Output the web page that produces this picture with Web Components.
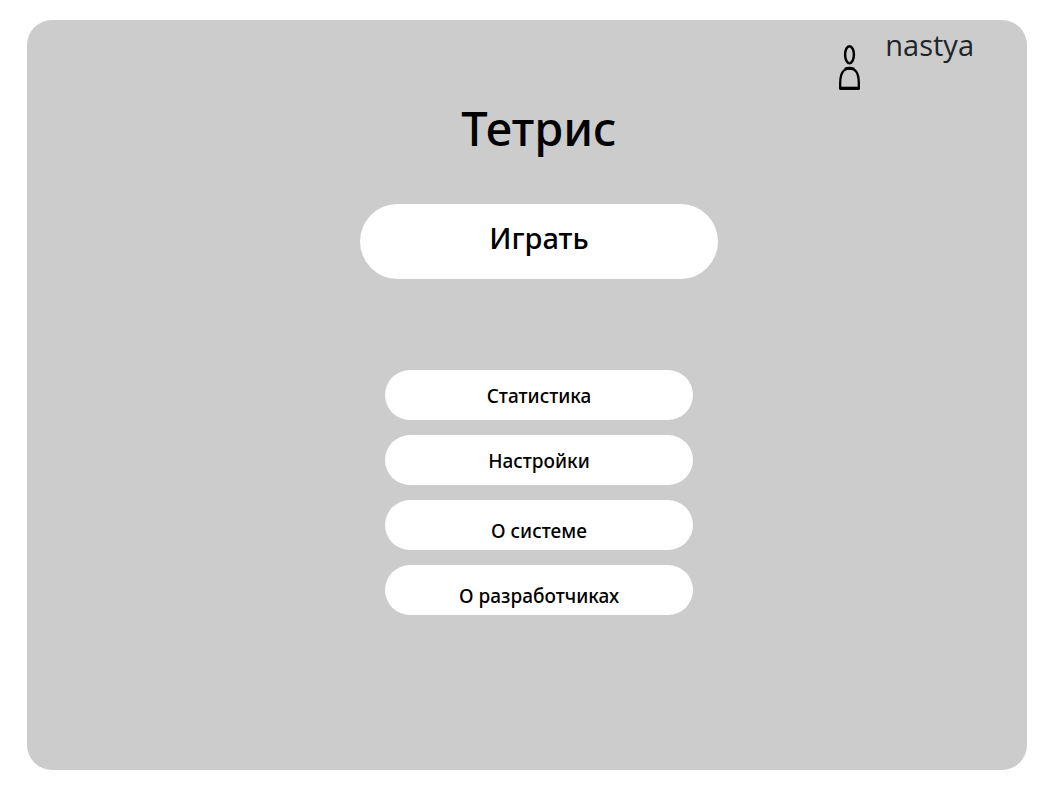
<!DOCTYPE html>
<html lang="ru">
<head>
<meta charset="utf-8">
<meta name="viewport" content="width=device-width, initial-scale=1">
<title>Тетрис</title>
<style>
  html, body { margin: 0; }
  body {
    font-family: "Noto Sans", "Open Sans", sans-serif;
    color: #000;
    background: #fff;
  }
</style>
</head>
<body>
<game-screen>
  <user-badge slot="user">nastya</user-badge>
  <span slot="title">Тетрис</span>
  <menu-button size="large">Играть</menu-button>
  <menu-list>
    <menu-button>Статистика</menu-button>
    <menu-button>Настройки</menu-button>
    <menu-button variant="about">О системе</menu-button>
    <menu-button variant="about">О разработчиках</menu-button>
  </menu-list>
</game-screen>

<script>
class GameScreen extends HTMLElement {
  constructor() {
    super();
    this.attachShadow({ mode: "open" }).innerHTML = `
      <style>
        :host { display: flex; box-sizing: border-box; min-height: 100vh; padding: 20px 20px 18px 27px; }
        main { flex: 1; min-width: 0; box-sizing: border-box; border-radius: 25px; background: #ccc; padding-bottom: 24px; }
        header { display: flex; justify-content: flex-end; height: 74px; padding-right: 53px; }
        .content { display: flex; flex-direction: column; align-items: center; padding-left: 24px; }
        h1 { margin: 0 0 42px; font-size: 47px; line-height: 68px; font-weight: 500; }
      </style>
      <main>
        <header><slot name="user"></slot></header>
        <div class="content">
          <h1><slot name="title"></slot></h1>
          <slot></slot>
        </div>
      </main>`;
  }
}

class UserBadge extends HTMLElement {
  constructor() {
    super();
    this.attachShadow({ mode: "open" }).innerHTML = `
      <style>
        :host { display: flex; align-items: flex-start; gap: 24px; }
        svg { display: block; width: 24px; height: 48px; margin-top: 24px; fill: none; stroke: #000; }
        .name { margin-top: 5px; font: 29px/40px "Open Sans", "Noto Sans", sans-serif; color: #212529; }
      </style>
      <svg viewBox="0 0 24 48" aria-hidden="true">
        <ellipse cx="12.5" cy="10.7" rx="4.4" ry="8.5" stroke-width="2.5"/>
        <path d="M3.2 44.5V39C3.2 29.5 6.5 24.4 12.5 24.4S21.8 29.5 21.8 39V44.5Z" stroke-width="2.3" stroke-linejoin="round"/>
        <path d="M2.6 44.3H22.4" stroke-width="3.2"/>
        <path d="M8 25.2Q12.5 23.4 17 25.2" stroke-width="3"/>
      </svg>
      <span class="name"><slot></slot></span>`;
  }
}

class MenuList extends HTMLElement {
  constructor() {
    super();
    this.attachShadow({ mode: "open" }).innerHTML = `
      <style>
        :host { display: block; width: 100%; margin-top: 91px; }
        nav { display: flex; flex-direction: column; align-items: center; gap: 15px; }
      </style>
      <nav aria-label="Меню"><slot></slot></nav>`;
  }
}

class MenuButton extends HTMLElement {
  constructor() {
    super();
    this.attachShadow({ mode: "open" }).innerHTML = `
      <style>
        :host { display: block; width: 308px; max-width: 100%; }
        :host([size="large"]) { width: 358px; }
        button {
          display: block; box-sizing: border-box; width: 100%; height: 50px; margin: 0;
          padding: 2px 0 0; border: 0; border-radius: 25px; background: #fff; color: #000;
          font: 500 19px/24px "Noto Sans", "Open Sans", sans-serif; cursor: pointer;
        }
        :host([variant="about"]) button { padding-top: 12px; }
        :host([size="large"]) button { height: 75px; padding: 0 0 8px; border-radius: 38px; font-size: 29px; line-height: 40px; }
      </style>
      <button type="button"><slot></slot></button>`;
  }
}

customElements.define("game-screen", GameScreen);
customElements.define("user-badge", UserBadge);
customElements.define("menu-list", MenuList);
customElements.define("menu-button", MenuButton);
</script>
</body>
</html>
